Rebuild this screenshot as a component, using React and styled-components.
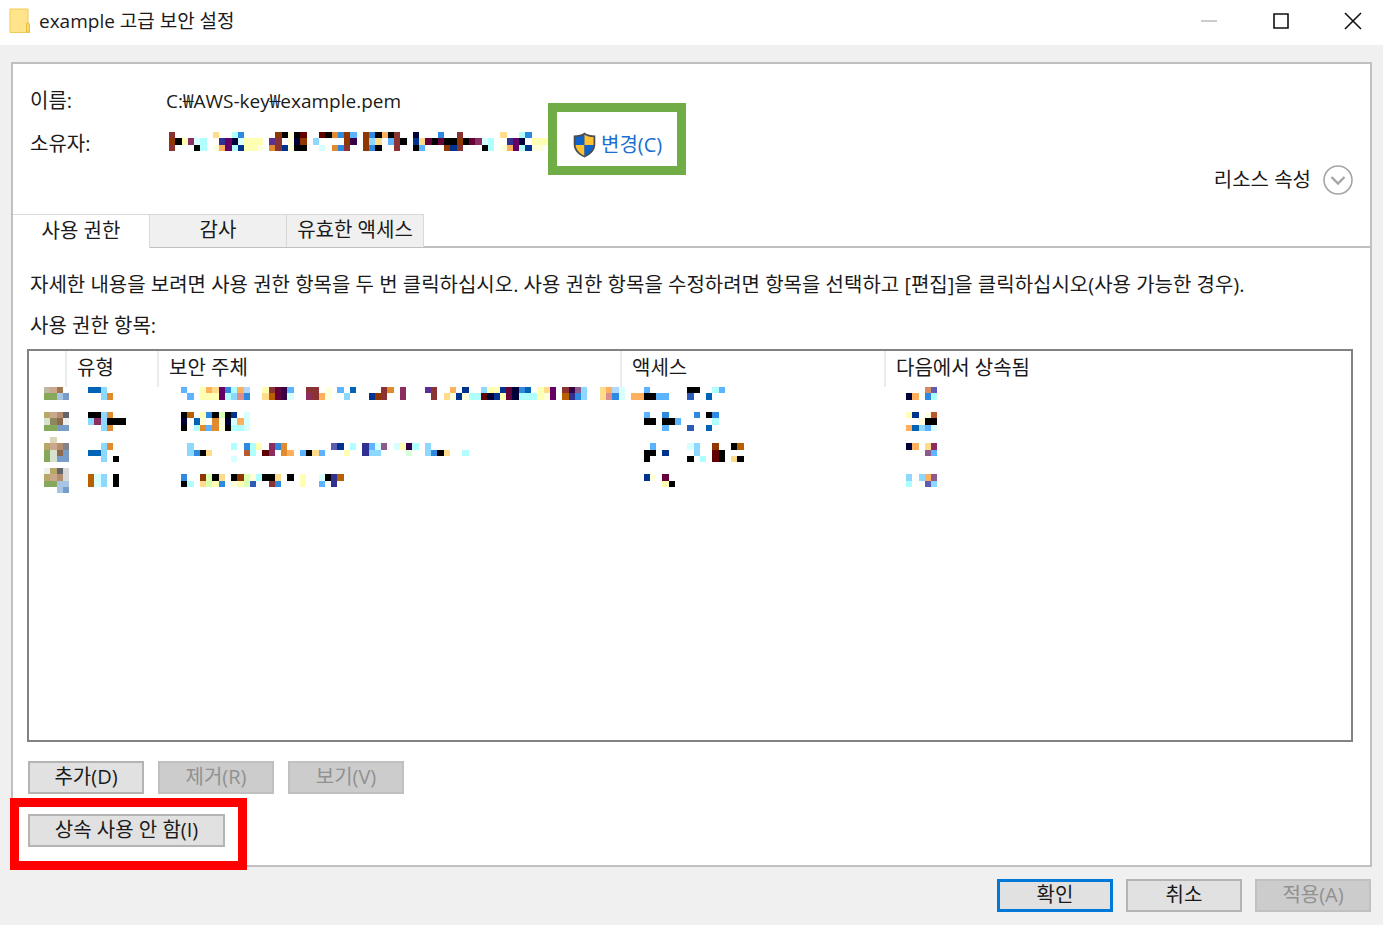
import styled, { createGlobalStyle } from "styled-components";

const GlobalStyle = createGlobalStyle`
*{
    box-sizing: border-box;
}
body{
    margin: 0;
    background-color: #f0f0f0;
    color: #1a1a1a;
    font-family: "Open Sans", "Noto Sans CJK KR", sans-serif;
    font-size: 20px;
    line-height: 24px;
}
button{
    font: inherit;
    color: inherit;
}
`
const Window = styled.div`
display: flex;
flex-direction: column;
min-height: 100vh;
`
const TitleBar = styled.header`
display: flex;
align-items: center;
height: 45px;
padding: 0 0 4px 9px;
background-color: #fff;
`
const Title = styled.h1`
flex: 1;
margin: 0 0 0 9px;
font-size: 19px;
font-weight: 400;
`
const WindowControls = styled.div`
display: flex;
gap: 12px;
`
const ControlButton = styled.button`
display: flex;
align-items: center;
justify-content: center;
width: 60px;
height: 40px;
padding: 0;
border: none;
background: none;
`
const Panel = styled.main`
flex: 1;
display: flex;
flex-direction: column;
margin: 17px 11px 0;
border: 2px solid #c0c0c0;
background-color: #fff;
`
const Details = styled.dl`
display: grid;
grid-template-columns: 136px 1fr;
row-gap: 19px;
margin: 0;
padding: 25px 17px 0;
dt, dd{
    margin: 0;
    height: 24px;
}
`
const Path = styled.dd`
font-size: 19px;
`
const Owner = styled.dd`
display: flex;
gap: 23px;
padding-left: 3px;
`
const Highlight = styled.div`
position: relative;
width: fit-content;
&::after{
    content: "";
    position: absolute;
    inset: ${(props) => props.$inset};
    border: 9px solid ${(props) => props.$color};
    pointer-events: none;
}
`
const ChangeLink = styled.a`
display: flex;
align-items: center;
gap: 5px;
color: #1a6fd0;
text-decoration: none;
`
const ResourceRow = styled.div`
display: flex;
justify-content: flex-end;
margin: 9px 17px 19px;
`
const ResourceButton = styled.button`
display: flex;
align-items: center;
gap: 12px;
height: 30px;
padding: 0;
border: none;
background: none;
`
const TabList = styled.div`
display: flex;
height: 34px;
border-bottom: 2px solid #c0c0c0;
`
const Tab = styled.button`
width: 137px;
height: ${(props) => (props.$active ? "34px" : "33px")};
padding: 0 0 2px;
border: 1px solid #d9d9d9;
border-width: 1px 1px 0 0;
background-color: ${(props) => (props.$active ? "#fff" : "#f0f0f0")};
`
const TabPage = styled.section`
flex: 1;
display: flex;
flex-direction: column;
padding: 25px 17px 18px 14px;
`
const Text = styled.p`
margin: 0 0 ${(props) => props.$gap} 3px;
`
const ListBox = styled.div`
flex: 1;
border: 2px solid #828282;
`
const Table = styled.table`
width: 100%;
table-layout: fixed;
border-collapse: collapse;
th{
    height: 36px;
    padding: 0 0 3px 10px;
    border-right: 2px solid #ebebeb;
    font-weight: 400;
    text-align: left;
}
th:last-child{
    border-right: none;
}
td{
    padding: 0;
    vertical-align: top;
}
`
const Cell = styled.td`
&&{
    padding-left: ${(props) => props.$indent};
}
`
const Col = styled.col`
width: ${(props) => props.$width};
`
const Blocks = styled.svg`
display: block;
flex: none;
overflow: visible;
`
const Buttons = styled.div`
display: flex;
gap: 14px;
margin: 19px 0 20px 1px;
`
const InheritRow = styled.div`
margin-left: 1px;
`
const Button = styled.button`
width: ${(props) => props.$width || "116px"};
height: 33px;
padding: 0 0 2px;
border: ${(props) => (props.$primary ? "3px solid #0078d7" : "2px solid #b4b4b4")};
background-color: #e1e1e1;
&:disabled{
    border-color: #c0c0c0;
    background-color: #cccccc;
    color: #919191;
}
`
const Footer = styled.footer`
display: flex;
justify-content: flex-end;
gap: 13px;
padding: 12px 12px 13px;
`

const COLORS = {
    K: "#000000", N: "#000038", B: "#00338f", b: "#2d5cb8", U: "#0063b5", M: "#2d8ae0",
    S: "#5cb3ff", C: "#8cd8ff", s: "#b3d8ff", A: "#b0ffff", a: "#d8ffff",
    Y: "#ffffb3", y: "#ffffdb", O: "#ffdb8c", o: "#ffb05c", D: "#e08b2d", T: "#b86000",
    R: "#8b3333", r: "#903600", F: "#b85a2d", w: "#600000", W: "#660038", P: "#660066",
    p: "#8b2d60", n: "#350048", V: "#5c3090", I: "#303090", i: "#5c5cb5",
    G: "#d8ffdb", g: "#dbffb3", e: "#db8b60", h: "#8b5c8b", z: "#db8c8c",
    1: "#bcb8a4", 2: "#cba78b", 3: "#a07850", 4: "#86a85a", 5: "#a8c4e4", 6: "#789cc8",
    7: "#b8a868", 8: "#b48e70", 9: "#62666a", 0: "#d6e2ce", q: "#90885c", m: "#8c6a50",
    d: "#808488", l: "#d8d8d8", "-": "#eef0ec", t: "#dcd4b8",
}

const BLOCK = 6.25

const OWNER = [
    "R......O..AM.....rKyKw..wKDMrS.rMKoKR..N...M..R......O..AM..",
    "rKYpaA..IPNaYYY.VR.yNr.C....rn.rCO.SRK.BOWKWKKrKWpaA..IPN.YYY",
    "R...KA.yoPABYYy.DRByKK..a.DMR..rMK..R..KS...rBR...KA.yoPAByy",
]

const ENTRIES = [
    {
        height: 25,
        icon: ["123.", "4456"],
        type: ["UUC.", "..CD"],
        principal: [
            "S..YoOPMAos..YRWnS..RR.y.S.U....RD.p...VR..o.B..CYYBWNMU.YOP.RnhC..Oosa",
            ".S.YYYPACzM..OTWna..pRoy..C...BrR..p....R.OyByAAwNBYWNAAAYyP.TIMC..OzMa",
        ],
        access: ["..S......KK..AS", "ooKKSS...b..U"],
        inherited: ["...ei", "No.MA"],
    },
    {
        height: 25,
        icon: ["7289", "0qm-", "4466"],
        type: ["KKCD", "CpCKKK", "..CD"],
        principal: ["KT.YMKgKB.a", "N.Uy.DyNaoa", "K.ADSDyKAAa"],
        access: ["..S..M....M.KM", "..KK.KKS.....A", ".....S...b..U"],
        inherited: ["YB.yF", "..yKK", "oUCSa"],
    },
    {
        height: 31,
        icon: [".t..", "728d", "40m6", "4066"],
        type: ["", "..CD", "UUC.", "..C.K"],
        principal: [
            "",
            ".C......A.MAY.pMD.......iB.A.ISah.aYnA.C",
            ".CMKO.....FA.wp.Do.SKOS...Y..ICC....G..CMKO..A",
            "........a",
        ],
        access: ["", "...S.....aC..r..KT", "..KK.B....C..wK", "..K......K.A.wK.OK"],
        inherited: ["", "No.Op", "...hS"],
    },
    {
        height: 25,
        icon: ["-79l", "728l", "4455", "..56"],
        type: ["", "TaC.K", "TaC.K"],
        principal: ["", "M..rgKO.KrgyAKKO.K.Y..aKIT", "KA.OgYM.yYgb..RM...Y..S.I"],
        access: ["", "..By.W", ".....YK"],
        inherited: ["", "C.Coh", "A..iC"],
    },
]

function Mosaic({ rows, height }) {
    const columns = Math.max(...rows.map((row) => row.length))
    return (
        <Blocks width={Math.round(columns * BLOCK)} height={height} shapeRendering="crispEdges" aria-hidden="true">
            {rows.map((row, y) =>
                [...row].map((key, x) =>
                    COLORS[key] ? (
                        <rect key={`${x}-${y}`} x={x * BLOCK} y={y * BLOCK} width={BLOCK} height={BLOCK} fill={COLORS[key]} />
                    ) : null
                )
            )}
        </Blocks>
    );
}

function FolderIcon() {
    return (
        <svg width="21" height="25" viewBox="0 0 21 25" aria-hidden="true">
            <path d="M1 1h18v14l1.500 1v8.500H1z" fill="#ffe48c" stroke="#eecb52" />
            <path d="M17.500 24v-8.500l1.500-1 1.500 1.500V24z" fill="#fbd969" stroke="#e6bf45" />
        </svg>
    );
}

function ShieldIcon() {
    return (
        <svg width="23" height="26" viewBox="0 0 23 26" aria-hidden="true">
            <clipPath id="shield">
                <path d="M11.500 2.500c2.500 1.800 5.500 2.600 9 2.600v7c0 5-3.500 9-9 11.700-5.500-2.700-9-6.700-9-11.700v-7c3.500 0 6.500-.8 9-2.600z" />
            </clipPath>
            <path d="M11.500.5c2.800 2.200 6.200 3 10.800 3v8.700c0 6-4 10.300-10.800 13.300C4.700 22.500.7 18.200.7 12.200V3.500c4.600 0 8-.8 10.800-3z" fill="#4a4f55" />
            <g clipPath="url(#shield)">
                <path d="M0 0h11.500v13H0z" fill="#0f63c8" />
                <path d="M11.500 0H23v13H11.500z" fill="#ffc233" />
                <path d="M0 13h11.500v13H0z" fill="#ffc233" />
                <path d="M11.500 13H23v13H11.500z" fill="#0f63c8" />
            </g>
        </svg>
    );
}

function App() {
    return (
        <Window>
            <GlobalStyle />
            <TitleBar>
                <FolderIcon />
                <Title>example 고급 보안 설정</Title>
                <WindowControls>
                    <ControlButton aria-label="최소화" disabled>
                        <svg width="18" height="18"><path d="M1 9h16" stroke="#cccccc" strokeWidth="2" /></svg>
                    </ControlButton>
                    <ControlButton aria-label="최대화">
                        <svg width="18" height="18"><path d="M2 2h14v14H2z" fill="none" stroke="#111" strokeWidth="1.600" /></svg>
                    </ControlButton>
                    <ControlButton aria-label="닫기">
                        <svg width="18" height="18"><path d="M1 1l16 16M17 1L1 17" stroke="#111" strokeWidth="1.600" /></svg>
                    </ControlButton>
                </WindowControls>
            </TitleBar>
            <Panel>
                <Details>
                    <dt>이름:</dt>
                    <Path>C:₩AWS-key₩example.pem</Path>
                    <dt>소유자:</dt>
                    <Owner>
                        <Mosaic rows={OWNER} height={19} />
                        <Highlight $color="#70ad47" $inset="-29px -24px -19px -25px">
                            <ChangeLink href="#owner">
                                <ShieldIcon />
                                변경(C)
                            </ChangeLink>
                        </Highlight>
                    </Owner>
                </Details>
                <ResourceRow>
                    <ResourceButton>
                        리소스 속성
                        <svg width="30" height="30" fill="none" stroke="#a6a6a6" aria-hidden="true">
                            <circle cx="15" cy="15" r="14" strokeWidth="1.600" />
                            <path d="M8.500 12l6.500 6.500 6.500-6.500" strokeWidth="2.400" />
                        </svg>
                    </ResourceButton>
                </ResourceRow>
                <TabList role="tablist">
                    <Tab role="tab" aria-selected="true" $active>사용 권한</Tab>
                    <Tab role="tab" aria-selected="false">감사</Tab>
                    <Tab role="tab" aria-selected="false">유효한 액세스</Tab>
                </TabList>
                <TabPage>
                    <Text $gap="17px">
                        자세한 내용을 보려면 사용 권한 항목을 두 번 클릭하십시오. 사용 권한 항목을 수정하려면 항목을 선택하고 [편집]을 클릭하십시오(사용 가능한 경우).
                    </Text>
                    <Text $gap="11px" id="entries">사용 권한 항목:</Text>
                    <ListBox>
                        <Table aria-labelledby="entries">
                            <colgroup>
                                <Col $width="37px" />
                                <Col $width="92px" />
                                <Col $width="463px" />
                                <Col $width="264px" />
                                <Col />
                            </colgroup>
                            <thead>
                                <tr>
                                    <th scope="col" aria-label="아이콘"></th>
                                    <th scope="col">유형</th>
                                    <th scope="col">보안 주체</th>
                                    <th scope="col">액세스</th>
                                    <th scope="col">다음에서 상속됨</th>
                                </tr>
                            </thead>
                            <tbody>
                                {ENTRIES.map((entry, index) => (
                                    <tr key={index}>
                                        <Cell $indent="15px"><Mosaic rows={entry.icon} height={entry.height} /></Cell>
                                        <Cell $indent="22px"><Mosaic rows={entry.type} height={entry.height} /></Cell>
                                        <Cell $indent="23px"><Mosaic rows={entry.principal} height={entry.height} /></Cell>
                                        <Cell $indent="10px"><Mosaic rows={entry.access} height={entry.height} /></Cell>
                                        <Cell $indent="21px"><Mosaic rows={entry.inherited} height={entry.height} /></Cell>
                                    </tr>
                                ))}
                            </tbody>
                        </Table>
                    </ListBox>
                    <Buttons>
                        <Button>추가(D)</Button>
                        <Button disabled>제거(R)</Button>
                        <Button disabled>보기(V)</Button>
                    </Buttons>
                    <InheritRow>
                        <Highlight $color="#ff0000" $inset="-16px -22px -23px -18px">
                            <Button $width="197px">상속 사용 안 함(I)</Button>
                        </Highlight>
                    </InheritRow>
                </TabPage>
            </Panel>
            <Footer>
                <Button $primary>확인</Button>
                <Button>취소</Button>
                <Button disabled>적용(A)</Button>
            </Footer>
        </Window>
    );
}
export default App;
